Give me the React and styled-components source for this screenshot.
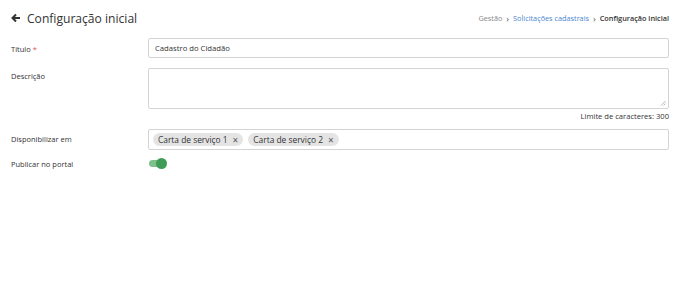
import styled, { createGlobalStyle } from 'styled-components';

const GlobalStyle = createGlobalStyle`
  body {
    margin: 0;
    background: #ffffff;
    font-family: 'Open Sans', 'Noto Sans', sans-serif;
    color: #333;
  }
`;

const Page = styled.div`
  padding: 7px 6px 0 11px;
`;

const Header = styled.div`
  display: flex;
  align-items: center;
  justify-content: space-between;
  height: 22px;
  margin-bottom: 9px;
`;

const Title = styled.h1`
  display: flex;
  align-items: center;
  gap: 6px;
  margin: 0;
  font-size: 12.1px;
  font-weight: 400;
  color: #333;
`;

const Crumbs = styled.nav`
  display: flex;
  align-items: center;
  gap: 4px;
  font-size: 7.3px;
  color: #888;
`;

const Crumb = styled.span`
  color: ${(p) => (p.link ? '#4a86d0' : p.current ? '#333' : '#888')};
  font-weight: ${(p) => (p.current ? 600 : 400)};
`;

const Sep = styled.span`
  color: #555;
  font-size: 9px;
  line-height: 1;
`;

const Row = styled.div`
  display: grid;
  grid-template-columns: 137px 1fr;
  align-items: start;
  margin-bottom: ${(p) => p.gap || 10}px;
`;

const Label = styled.label`
  font-size: 7.5px;
  color: #333;
  padding-top: ${(p) => p.top || 6}px;
`;

const Req = styled.span`
  color: #e05050;
`;

const Input = styled.div`
  height: 20px;
  box-sizing: border-box;
  border: 1px solid #d4d4d4;
  border-radius: 2px;
  display: flex;
  align-items: center;
  padding: 0 6px;
  font-size: 7.7px;
  color: #333;
`;

const Area = styled.div`
  position: relative;
  height: 41px;
  box-sizing: border-box;
  border: 1px solid #d4d4d4;
  border-radius: 2px;
`;

const Grip = styled.svg`
  position: absolute;
  right: 2px;
  bottom: 2px;
`;

const Hint = styled.div`
  text-align: right;
  font-size: 7.6px;
  color: #333;
  margin-top: 2px;
`;

const Tags = styled(Input)`
  height: 21px;
  padding: 0 4px;
  gap: 5px;
`;

const Chip = styled.span`
  display: inline-flex;
  align-items: center;
  gap: 5px;
  height: 13px;
  padding: 0 5px;
  border-radius: 7px;
  background: #e4e4e4;
  font-size: 8.4px;
  color: #333;
`;

const X = styled.span`
  font-size: 10px;
  line-height: 1;
  color: #555;
`;

const Toggle = styled.div`
  position: relative;
  width: 17px;
  height: 7px;
  margin: 3px 0 0 1px;
  border-radius: 4px;
  background: #7cc08b;
`;

const Knob = styled.span`
  position: absolute;
  right: -1px;
  top: -2px;
  width: 11px;
  height: 11px;
  border-radius: 50%;
  background: #3f9b55;
`;

export default function App() {
  return (
    <Page>
      <GlobalStyle />
      <Header>
        <Title>
          <svg width="10" height="10" viewBox="0 0 10 10">
            <path d="M9 5H2.5M5 1.5L1.5 5 5 8.5" stroke="#333" strokeWidth="2" fill="none" />
          </svg>
          Configuração inicial
        </Title>
        <Crumbs>
          <Crumb>Gestão</Crumb>
          <Sep>›</Sep>
          <Crumb link>Solicitações cadastrais</Crumb>
          <Sep>›</Sep>
          <Crumb current>Configuração inicial</Crumb>
        </Crumbs>
      </Header>
      <Row>
        <Label>Título <Req>*</Req></Label>
        <Input>Cadastro do Cidadão</Input>
      </Row>
      <Row gap={8}>
        <Label top={3}>Descrição</Label>
        <div>
          <Area>
            <Grip width="6" height="6" viewBox="0 0 6 6">
              <path d="M5.5 1L1 5.5M5.5 3.5L3.5 5.5" stroke="#999" strokeWidth="0.7" />
            </Grip>
          </Area>
          <Hint>Limite de caracteres: 300</Hint>
        </div>
      </Row>
      <Row gap={7}>
        <Label top={5}>Disponibilizar em</Label>
        <Tags>
          <Chip>Carta de serviço 1 <X>×</X></Chip>
          <Chip>Carta de serviço 2 <X>×</X></Chip>
        </Tags>
      </Row>
      <Row>
        <Label top={2}>Publicar no portal</Label>
        <Toggle><Knob /></Toggle>
      </Row>
    </Page>
  );
}
